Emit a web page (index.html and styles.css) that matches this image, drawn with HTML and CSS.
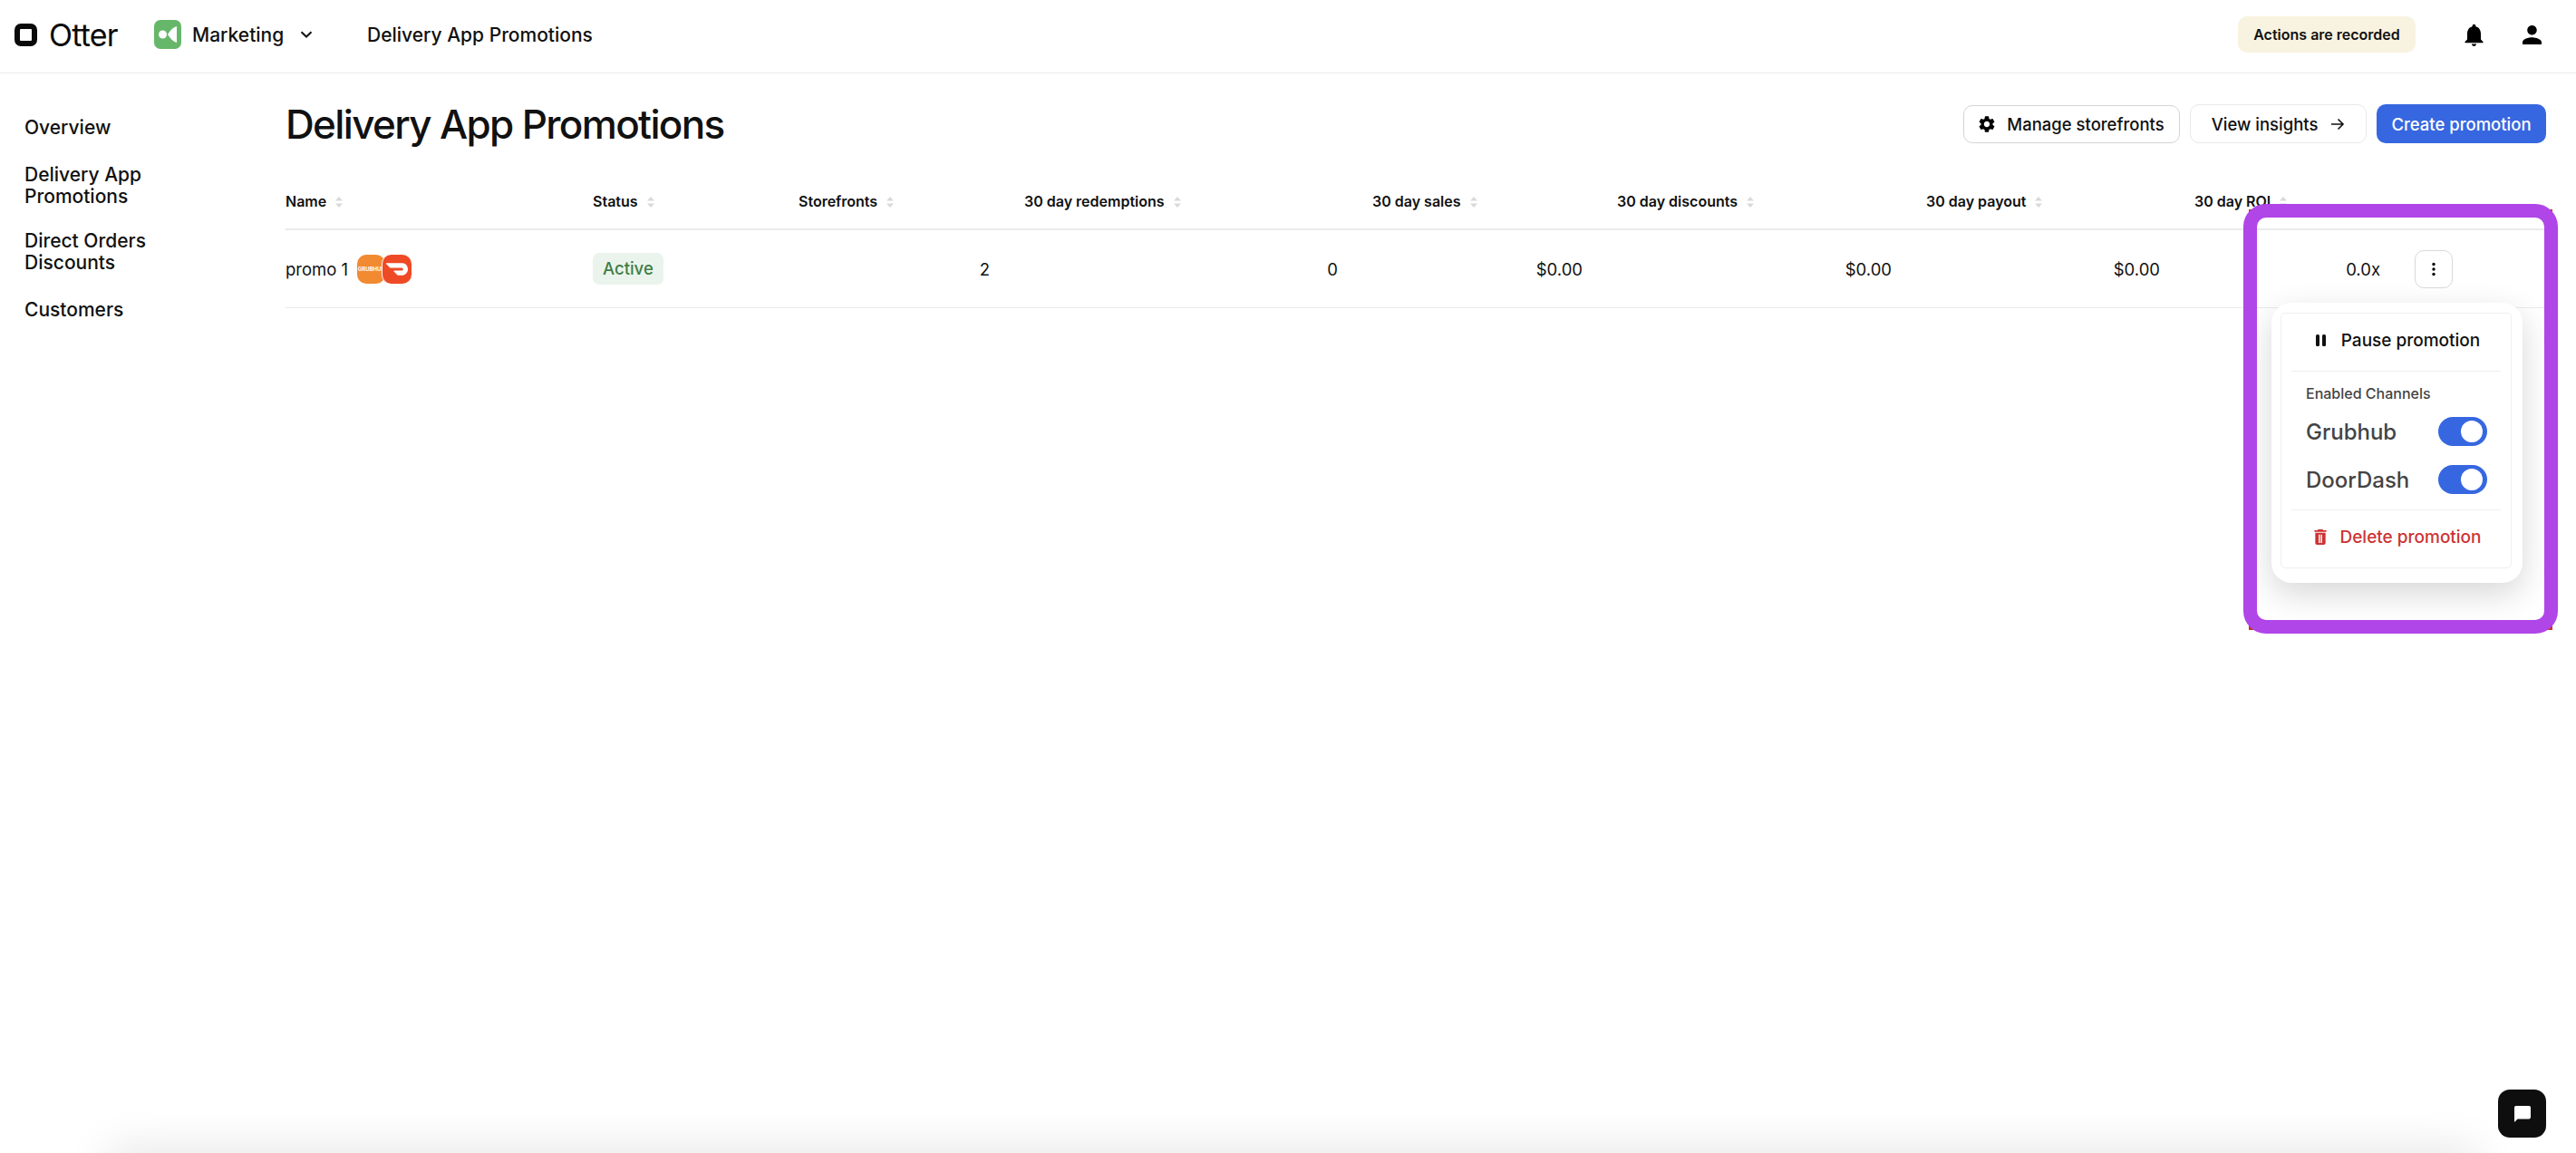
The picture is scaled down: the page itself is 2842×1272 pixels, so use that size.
FILE: index.html
```html
<!DOCTYPE html>
<html lang="en">
<head>
    <meta charset="UTF-8">
    <title>Delivery App Promotions</title>
    <link rel="stylesheet" href="styles.css">
</head>
<body>
    <svg class="icon-defs" width="0" height="0">
        <symbol id="sort" viewBox="0 0 8 12"><path d="M4 0l4 4.5H0zM4 12L0 7.5h8z"/></symbol>
    </svg>

    <header class="topbar">
        <span class="logo-mark"></span>
        <span class="logo-text">Otter</span>
        <span class="app-icon">
            <svg viewBox="0 0 30 32" width="30" height="32"><circle cx="9.5" cy="16" r="4.5" fill="#fff"/><path d="M25 7v18c-5-1.500-7-5-10-9 3-4 5-7.500 10-9z" fill="#fff"/></svg>
        </span>
        <span class="app-name">Marketing</span>
        <svg class="chevron" viewBox="0 0 14 8" width="14" height="8"><path d="M1.500 1.200L7 6.500l5.500-5.300" fill="none" stroke="#111" stroke-width="2"/></svg>
        <span class="page-name">Delivery App Promotions</span>
        <span class="recorded">Actions are recorded</span>
        <svg class="bell" viewBox="4 2 16 20" width="23" height="25"><path d="M12 22c1.100 0 2-.9 2-2h-4c0 1.100.89 2 2 2zm6-6v-5c0-3.070-1.640-5.640-4.500-6.320V4c0-.83-.67-1.500-1.500-1.500s-1.500.67-1.500 1.500v.68C7.630 5.360 6 7.920 6 11v5l-2 2v1h16v-1l-2-2z"/></svg>
        <svg class="person" viewBox="4 4 16 16" width="21" height="21"><path d="M12 12c2.210 0 4-1.790 4-4s-1.790-4-4-4-4 1.790-4 4 1.790 4 4 4zm0 2c-2.670 0-8 1.340-8 4v2h16v-2c0-2.660-5.330-4-8-4z"/></svg>
    </header>

    <div class="layout">
        <nav class="sidenav">
            <a>Overview</a>
            <a>Delivery App Promotions</a>
            <a class="nav-tight">Direct Orders Discounts</a>
            <a>Customers</a>
        </nav>

        <main class="content">
            <div class="title-row">
                <h1>Delivery App Promotions</h1>
                <button class="btn btn-manage">
                    <svg viewBox="2 2 20 20" width="18" height="18"><path d="M19.140 12.940c.04-.3.06-.61.06-.94 0-.32-.02-.64-.07-.94l2.030-1.580c.18-.14.23-.41.12-.61l-1.920-3.320c-.12-.22-.37-.29-.59-.22l-2.390.96c-.5-.38-1.030-.7-1.620-.94l-.36-2.540c-.04-.24-.24-.41-.48-.41h-3.840c-.24 0-.43.17-.47.41l-.36 2.540c-.59.24-1.130.57-1.620.94l-2.390-.96c-.22-.08-.47 0-.59.22L2.740 8.870c-.12.21-.08.47.12.61l2.030 1.580c-.05.3-.09.63-.09.94s.02.64.07.94l-2.030 1.580c-.18.14-.23.41-.12.61l1.920 3.320c.12.22.37.29.59.22l2.390-.96c.5.38 1.030.7 1.620.94l.36 2.540c.05.24.24.41.48.41h3.840c.24 0 .44-.17.47-.41l.36-2.540c.59-.24 1.130-.56 1.620-.94l2.390.96c.22.08.47 0 .59-.22l1.920-3.320c.12-.22.07-.47-.12-.61l-2.010-1.580zM12 15.600c-1.980 0-3.600-1.620-3.600-3.600s1.620-3.600 3.600-3.600 3.600 1.620 3.600 3.600-1.620 3.600-3.600 3.600z"/></svg>
                    Manage storefronts
                </button>
                <button class="btn btn-insights">
                    View insights
                    <svg viewBox="0 0 16 14" width="16" height="14"><path d="M1 7h13M8.500 1.500L14 7l-5.500 5.500" fill="none" stroke="#111" stroke-width="1.600"/></svg>
                </button>
                <button class="btn btn-create">Create promotion</button>
            </div>

            <table class="promos">
                <thead>
                    <tr>
                        <th>Name<svg class="sort"><use href="#sort"/></svg></th>
                        <th>Status<svg class="sort"><use href="#sort"/></svg></th>
                        <th>Storefronts<svg class="sort"><use href="#sort"/></svg></th>
                        <th>30 day redemptions<svg class="sort"><use href="#sort"/></svg></th>
                        <th>30 day sales<svg class="sort"><use href="#sort"/></svg></th>
                        <th>30 day discounts<svg class="sort"><use href="#sort"/></svg></th>
                        <th>30 day payout<svg class="sort"><use href="#sort"/></svg></th>
                        <th>30 day ROI<svg class="sort"><use href="#sort"/></svg></th>
                        <th></th>
                    </tr>
                </thead>
                <tbody>
                    <tr>
                        <td>
                            <div class="promo-name">
                                promo 1
                                <span class="channels">
                                    <span class="channel grubhub">GRUBHUB</span>
                                    <span class="channel doordash">
                                        <svg viewBox="0 0 24 24" width="24" height="24"><path d="M23.071 8.409a6.090 6.090 0 00-5.396-3.228H.584A.589.589 0 00.170 6.184L3.894 9.930a1.752 1.752 0 001.242.516h12.049a1.554 1.554 0 11.031 3.108H8.910a.589.589 0 00-.415 1.003l3.725 3.747a1.750 1.750 0 001.242.516h3.757c4.887 0 8.584-5.225 5.852-10.413" fill="#fff"/></svg>
                                    </span>
                                </span>
                            </div>
                        </td>
                        <td><span class="status">Active</span></td>
                        <td class="num">2</td>
                        <td class="num">0</td>
                        <td class="num">$0.00</td>
                        <td class="num">$0.00</td>
                        <td class="num">$0.00</td>
                        <td class="num">0.0x</td>
                        <td>
                            <div class="kebab-wrap">
                                <button class="kebab">
                                    <svg viewBox="0 0 6 16" width="6" height="16"><circle cx="3" cy="2.500" r="1.700"/><circle cx="3" cy="8" r="1.700"/><circle cx="3" cy="13.500" r="1.700"/></svg>
                                </button>
                                <div class="menu">
                                    <div class="menu-inner">
                                        <div class="menu-action">
                                            <svg viewBox="0 0 11 13" width="11" height="13"><rect x="0" y="0" width="4" height="13" rx="1.500"/><rect x="7" y="0" width="4" height="13" rx="1.500"/></svg>
                                            Pause promotion
                                        </div>
                                        <div class="menu-channels">
                                            <div class="menu-label">Enabled Channels</div>
                                            <div class="channel-row">Grubhub<span class="toggle"></span></div>
                                            <div class="channel-row">DoorDash<span class="toggle"></span></div>
                                        </div>
                                        <div class="menu-action danger">
                                            <svg viewBox="5 3 14 18" width="14" height="17"><path fill-rule="evenodd" d="M6 19c0 1.100.9 2 2 2h8c1.100 0 2-.9 2-2V7H6v12zm4-10h1.500v10H10zm2.500 0H14v10h-1.500zM19 4h-3.500l-1-1h-5l-1 1H5v2h14V4z"/></svg>
                                            Delete promotion
                                        </div>
                                    </div>
                                </div>
                            </div>
                        </td>
                    </tr>
                </tbody>
            </table>
        </main>
    </div>

    <!-- review annotation drawn over the row menu -->
    <div class="mark-under"></div>
    <div class="mark"></div>

    <button class="chat">
        <svg viewBox="2 2 20 20" width="18" height="18"><path d="M20 2H4c-1.100 0-2 .9-2 2v18l4-4h14c1.100 0 2-.9 2-2V4c0-1.100-.9-2-2-2z" fill="#fff"/></svg>
    </button>
    <div class="bottom-fade"></div>
</body>
</html>
```

FILE: styles.css
```css
html, body {
    width: 100%;
    height: 100%;
    margin: 0;
    overflow: hidden;
    background: #fff;
    color: #111;
    font-family: Inter, "Noto Sans", sans-serif;
}
body {
    position: relative;
}
.icon-defs {
    position: absolute;
}
button {
    font-family: inherit;
    cursor: pointer;
}

/* top bar */
.topbar {
    height: 76px;
    border-bottom: 1px solid #ebebeb;
    display: flex;
    align-items: center;
    padding: 0 38px 4px 16px;
}
.logo-mark {
    width: 25px;
    height: 25px;
    box-sizing: border-box;
    border: 6px solid #0a0a0a;
    border-radius: 7px;
}
.logo-text {
    width: 78px;
    margin-left: 13px;
    font-size: 34px;
    letter-spacing: -0.8px;
    color: #0a0a0a;
}
.app-icon {
    margin-left: 38px;
    width: 30px;
    height: 32px;
    background: #67b76b;
    border-radius: 7px;
    display: flex;
}
.app-name {
    width: 100px;
    margin-left: 12px;
    font-size: 21px;
    font-weight: 500;
}
.chevron {
    margin-left: 19px;
}
.page-name {
    margin-left: 60px;
    font-size: 21px;
    font-weight: 500;
}
.recorded {
    margin-left: auto;
    width: 196px;
    height: 40px;
    line-height: 40px;
    text-align: center;
    border-radius: 10px;
    background: #f8f2e0;
    font-size: 16px;
    font-weight: 600;
}
.bell {
    margin-left: 53px;
}
.person {
    margin-left: 42px;
}

/* page layout */
.layout {
    display: flex;
}
.sidenav {
    box-sizing: border-box;
    width: 315px;
    padding: 48px 20px 0 27px;
    display: flex;
    flex-direction: column;
    gap: 28px;
}
.sidenav a {
    width: 220px;
    font-size: 21px;
    font-weight: 500;
    line-height: 24px;
}
.sidenav .nav-tight {
    margin-top: -3px;
}
.content {
    flex: 1;
    padding: 34px 33px 0 0;
}
.title-row {
    display: flex;
    align-items: center;
    height: 43px;
    margin-bottom: 33px;
}
h1 {
    margin: 0 auto 0 0;
    font-size: 44px;
    font-weight: 500;
    letter-spacing: -1.65px;
}

/* buttons */
.btn {
    height: 43px;
    box-sizing: border-box;
    border: 1px solid #e8e8e8;
    border-radius: 10px;
    background: #fff;
    color: #111;
    font-size: 18.5px;
    font-weight: 500;
    display: flex;
    align-items: center;
    justify-content: center;
}
.btn-manage {
    width: 239px;
    height: 42px;
    margin-right: 11px;
    gap: 13px;
    border-color: #d4d4d4;
}
.btn-insights {
    width: 195px;
    margin-right: 11px;
    gap: 14px;
}
.btn-create {
    width: 187px;
    border: none;
    background: #3767e0;
    color: #fff;
}

/* table */
.promos {
    width: 100%;
    table-layout: fixed;
    border-collapse: collapse;
    font-size: 18.5px;
}
.promos th {
    height: 61px;
    padding: 0;
    text-align: left;
    font-size: 16px;
    font-weight: 600;
    border-bottom: 2px solid #ebebeb;
}
.promos td {
    height: 85px;
    padding: 0;
    border-bottom: 1px solid #ebebeb;
}
.promos th:nth-child(1) { width: 339px; }
.promos th:nth-child(2) { width: 227px; }
.promos th:nth-child(3) { width: 249px; }
.promos th:nth-child(4) { width: 384px; }
.promos th:nth-child(5) { width: 270px; }
.promos th:nth-child(6) { width: 341px; }
.promos th:nth-child(7) { width: 296px; }
.promos th:nth-child(8) { width: 243px; }
.sort {
    width: 8px;
    height: 12px;
    margin-left: 10px;
    fill: #d9d9d9;
    vertical-align: -1px;
}
.num {
    text-align: right;
    padding-right: 38px !important;
}
.promo-name {
    display: flex;
    align-items: center;
    gap: 10px;
}
.channels {
    display: flex;
}
.channel {
    width: 31px;
    height: 32px;
    border-radius: 10px;
    display: flex;
    align-items: center;
    justify-content: center;
}
.grubhub {
    background: #f28a32;
    color: #fff;
    font-size: 6px;
    font-weight: 700;
    overflow: hidden;
}
.doordash {
    width: 33px;
    box-sizing: border-box;
    margin-left: -4px;
    background: #ef4a26;
    border-left: 1px solid #fff;
}
.status {
    display: inline-block;
    height: 35px;
    line-height: 35px;
    padding: 0 11px;
    border-radius: 7px;
    background: #ebf4ec;
    color: #3f7d45;
    font-weight: 500;
}

/* row menu */
.kebab-wrap {
    position: relative;
    width: 42px;
}
.kebab {
    width: 42px;
    height: 42px;
    padding: 0;
    border: 1px solid #d9d9d9;
    border-radius: 10px;
    background: #fff;
    display: flex;
    align-items: center;
    justify-content: center;
}
.menu {
    position: absolute;
    z-index: 2;
    top: 58px;
    right: -77px;
    box-sizing: border-box;
    width: 277px;
    height: 309px;
    padding: 11px 12px 16px 10px;
    background: #fff;
    border-radius: 22px;
    box-shadow: 0 12px 36px rgba(0, 0, 0, 0.16);
}
.menu-inner {
    box-sizing: border-box;
    height: 100%;
    padding: 0 11px;
    border: 1px solid #efefef;
    border-radius: 5px;
    display: flex;
    flex-direction: column;
}
.menu-action {
    height: 63px;
    box-sizing: border-box;
    display: flex;
    align-items: center;
    justify-content: center;
    gap: 17px;
    font-size: 19px;
    font-weight: 500;
    padding: 0 0 3px 4px;
}
.menu-action svg {
    fill: #111;
}
.danger {
    flex: 1;
    color: #cc3333;
    gap: 14px;
}
.danger svg {
    fill: #cc3333;
}
.menu-channels {
    height: 154px;
    box-sizing: border-box;
    border-top: 1px solid #efefef;
    border-bottom: 1px solid #efefef;
    padding: 13px 15px 0 16px;
    color: #444;
}
.menu-label {
    font-size: 16px;
    font-weight: 500;
    line-height: 22px;
    margin-bottom: 5px;
}
.channel-row {
    height: 53px;
    display: flex;
    align-items: center;
    justify-content: space-between;
    font-size: 24px;
    font-weight: 500;
}
.toggle {
    position: relative;
    width: 54px;
    height: 32px;
    border-radius: 16px;
    background: #3767e0;
}
.toggle::after {
    content: "";
    position: absolute;
    top: 4px;
    right: 5px;
    width: 24px;
    height: 24px;
    border-radius: 50%;
    background: #fff;
}

/* annotation */
.mark-under {
    position: absolute;
    z-index: 3;
    left: 2481px;
    top: 231px;
    width: 335px;
    height: 464px;
    box-sizing: border-box;
    border: 6px solid #c8341f;
}
.mark {
    position: absolute;
    z-index: 3;
    left: 2475px;
    top: 225px;
    width: 347px;
    height: 474px;
    box-sizing: border-box;
    border: 15px solid #b045e8;
    border-radius: 25px;
}

/* chat + bottom shadow */
.chat {
    position: absolute;
    z-index: 4;
    left: 2756px;
    top: 1202px;
    width: 53px;
    height: 53px;
    padding: 0;
    border: none;
    border-radius: 13px;
    background: #0e0e0e;
    display: flex;
    align-items: center;
    justify-content: center;
}
.bottom-fade {
    position: absolute;
    left: 130px;
    right: 120px;
    top: 1280px;
    height: 20px;
    box-shadow: 0 0 50px 10px rgba(0, 0, 0, 0.12);
}
```
